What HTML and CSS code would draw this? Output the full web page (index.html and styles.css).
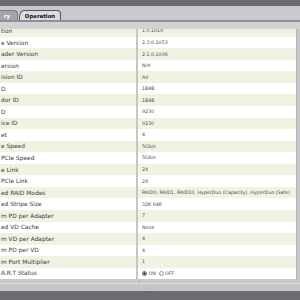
FILE: index.html
```html
<!DOCTYPE html>
<html>
<head>
<meta charset="utf-8">
<link rel="stylesheet" href="styles.css">
</head>
<body>
<div class="app">
  <div class="topbar"></div>
  <div class="tabstrip">
    <div class="tab tab-prev">ry</div>
    <div class="tab tab-active">Operation</div>
  </div>
  <div class="tabline"></div>
  <div class="band"></div>
  <div class="viewport">
    <div class="rows">
      <div class="row alt"><div class="lbl">tion</div><div class="val">1.0.1010</div></div>
      <div class="row"><div class="lbl">e Version</div><div class="val">2.3.0.1053</div></div>
      <div class="row alt"><div class="lbl">ader Version</div><div class="val">2.1.0.1006</div></div>
      <div class="row"><div class="lbl">ersion</div><div class="val">N/A</div></div>
      <div class="row alt"><div class="lbl">ision ID</div><div class="val">A0</div></div>
      <div class="row"><div class="lbl">D</div><div class="val">1B4B</div></div>
      <div class="row alt"><div class="lbl">dor ID</div><div class="val">1B4B</div></div>
      <div class="row"><div class="lbl">D</div><div class="val">9230</div></div>
      <div class="row alt"><div class="lbl">ice ID</div><div class="val">9230</div></div>
      <div class="row"><div class="lbl">et</div><div class="val">4</div></div>
      <div class="row alt"><div class="lbl">e Speed</div><div class="val">5Gb/s</div></div>
      <div class="row"><div class="lbl">PCIe Speed</div><div class="val">5Gb/s</div></div>
      <div class="row alt"><div class="lbl">e Link</div><div class="val">2X</div></div>
      <div class="row"><div class="lbl">PCIe Link</div><div class="val">2X</div></div>
      <div class="row alt"><div class="lbl">ed RAID Modes</div><div class="val">RAID0, RAID1, RAID10, HyperDuo (Capacity), HyperDuo (Safe)</div></div>
      <div class="row"><div class="lbl">ed Stripe Size</div><div class="val">32K 64K</div></div>
      <div class="row alt"><div class="lbl">m PD per Adapter</div><div class="val">7</div></div>
      <div class="row"><div class="lbl">ed VD Cache</div><div class="val">None</div></div>
      <div class="row alt"><div class="lbl">m VD per Adapter</div><div class="val">4</div></div>
      <div class="row"><div class="lbl">m PD per VD</div><div class="val">4</div></div>
      <div class="row alt"><div class="lbl">m Port Multiplier</div><div class="val">1</div></div>
      <div class="row"><div class="lbl">A.R.T Status</div><div class="val radios"><span class="radio on"></span><span class="rtxt">ON</span><span class="radio"></span><span class="rtxt">OFF</span></div></div>
    </div>
  </div>
  <div class="under"><div class="under-lbl"></div></div>
  <div class="gripbar"><span class="grip">.....</span></div>
  <div class="bottombar"></div>
</div>
</body>
</html>
```

FILE: styles.css
```css
html, body {
  margin: 0;
  padding: 0;
}
body {
  width: 300px;
  height: 300px;
  overflow: hidden;
  background: #c8c8cc;
  font-family: "DejaVu Sans", Verdana, sans-serif;
}
.app {
  display: flex;
  flex-direction: column;
  height: 300px;
}
.topbar {
  height: 6px;
  background: #6b6b73;
  flex: none;
}
.tabstrip {
  height: 14px;
  flex: none;
  background: #c9c9cd;
  display: flex;
  align-items: flex-end;
  gap: 1px;
}
.tab {
  height: 10px;
  display: flex;
  align-items: center;
  justify-content: center;
  font-weight: bold;
  font-size: 5.4px;
  box-sizing: border-box;
}
.tab-prev {
  width: 18px;
  background: #a4a4ac;
  color: #ffffff;
  border-top-right-radius: 4px;
  border: 1px solid #7c7c84;
  border-left: none;
  border-bottom: none;
  padding-right: 3px;
}
.tab-active {
  width: 42px;
  background: #dcdce0;
  color: #111;
  border: 1px solid #55555c;
  border-bottom: none;
  border-top-left-radius: 5px 7px;
  border-top-right-radius: 4px;
}
.tabline {
  height: 2px;
  background: #8e8e94;
  flex: none;
}
.band {
  height: 7px;
  flex: none;
  background: #d2d2d4;
}
.viewport {
  flex: 1;
  overflow: hidden;
  background: #ffffff;
  width: 296px;
  border-right: 1px solid #b4b4b8;
}
.rows {
  margin-top: -3.8px;
  display: grid;
  grid-auto-rows: 11.55px;
}
.row {
  display: grid;
  grid-template-columns: 138px 1fr;
  background: #ffffff;
  color: #3c3c3c;
}
.row.alt {
  background: #eef3e2;
}
.lbl {
  border-right: 2px solid #c6c6c6;
  padding-left: 1px;
  font-size: 5.9px;
  display: flex;
  align-items: center;
  white-space: nowrap;
  overflow: hidden;
}
.val {
  padding-left: 4px;
  font-size: 4.75px;
  display: flex;
  align-items: center;
  white-space: nowrap;
  color: #4a4a4a;
}
.radios {
  gap: 1px;
}
.radio {
  width: 3.4px;
  height: 3.4px;
  border-radius: 50%;
  border: 0.6px solid #9a9a9a;
  background: #f4f4f4;
}
.radio.on {
  background: radial-gradient(circle, #333 0 45%, #e8e8e8 55%);
  border-color: #666;
}
.rtxt {
  margin-right: 2px;
}
.under {
  height: 4px;
  flex: none;
  background: #c8c8c8;
}
.under-lbl {
  width: 138px;
  height: 100%;
  border-right: 2px solid #bcbcbc;
}
.gripbar {
  height: 8px;
  flex: none;
  background: #c6c6c8;
  border-top: 1px solid #dedee0;
  box-sizing: border-box;
  display: flex;
  align-items: center;
  justify-content: center;
}
.grip {
  font-size: 4px;
  color: #888;
  letter-spacing: 0.5px;
}
.bottombar {
  height: 9px;
  flex: none;
  background: #6b6b73;
}
```
